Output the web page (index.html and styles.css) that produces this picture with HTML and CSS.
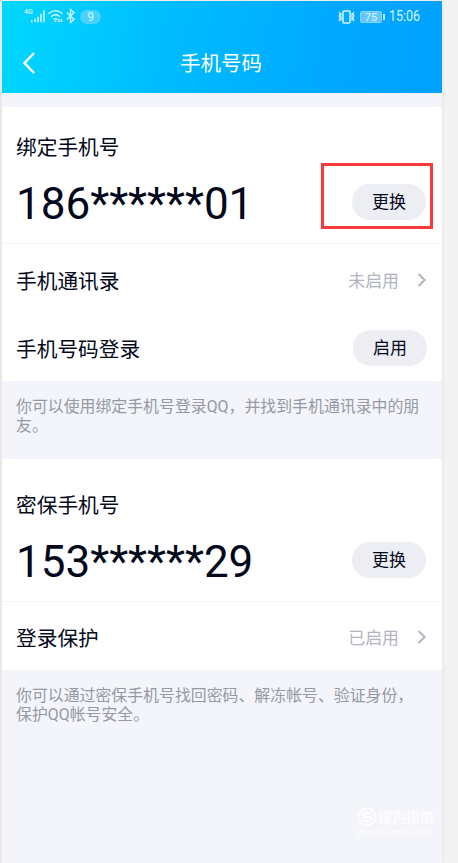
FILE: index.html
```html
<!DOCTYPE html>
<html lang="zh-CN">
<head>
<meta charset="utf-8">
<title>手机号码</title>
<link rel="stylesheet" href="styles.css">
</head>
<body>
<main class="phone">
  <header class="header">
    <div class="status">
      <span class="net">4G</span>
      <svg class="status-left" width="54" height="18" viewBox="0 0 54 18" fill="none" stroke="currentColor">
        <path stroke-width="1.500" d="M8.700 14.200v-2M12 14.200v-3.500M15 14.200v-5.500M18 14.200v-8.500M21 14.200v-12"/>
        <path stroke-width="1.300" d="M25.500 5.700q7-6 14 0M28 8.700q4.500-4 9 0M30.500 11.500q2-1.800 4 0"/>
        <path stroke-width="1.500" d="M31.500 13.300h2M36 11v3M38.500 11v3"/>
        <path stroke-width="1.300" d="M44 4.500l7 7-3.500 3V1.500l3.500 3-7 7"/>
      </svg>
      <span class="count">9</span>
      <svg class="vibrate" width="17" height="14" viewBox="0 0 17 14" fill="none" stroke="currentColor">
        <rect x="5" y="1" width="7" height="12" rx="1" stroke-width="1.500"/>
        <path stroke-width="1.100" d="M1 2l1.200 2-1.200 2 1.200 2-1.200 2 .6 1M3 3v8M16 2l-1.200 2 1.200 2-1.200 2 1.200 2-.6 1M14 3v8"/>
      </svg>
      <span class="battery">75</span>
      <span class="tip"></span>
      <span class="time">15:06</span>
    </div>
    <div class="nav">
      <svg class="back" width="14" height="24" viewBox="0 0 14 24" fill="none" stroke="#fff" stroke-width="2.500"><path d="M13 2L3.500 12l9.500 10"/></svg>
      <h1>手机号码</h1>
    </div>
  </header>
  <section class="card first">
    <div class="bound">
      <h2>绑定手机号</h2>
      <div class="number-row"><span class="number">186******01</span><button>更换</button><span class="highlight"></span></div>
    </div>
    <div class="row"><span>手机通讯录</span><span class="value">未启用<svg width="10" height="16" viewBox="0 0 10 16" fill="none" stroke="currentColor" stroke-width="2"><path d="M1.500 2l6.200 6-6.200 6"/></svg></span></div>
    <div class="row login"><span>手机号码登录</span><button>启用</button></div>
  </section>
  <p class="note">你可以使用绑定手机号登录QQ，并找到手机通讯录中的朋<br>友。</p>
  <section class="card second">
    <div class="bound">
      <h2>密保手机号</h2>
      <div class="number-row"><span class="number">153******29</span><button>更换</button></div>
    </div>
    <div class="row"><span>登录保护</span><span class="value">已启用<svg width="10" height="16" viewBox="0 0 10 16" fill="none" stroke="currentColor" stroke-width="2"><path d="M1.500 2l6.200 6-6.200 6"/></svg></span></div>
  </section>
  <p class="note last">你可以通过密保手机号找回密码、解冻帐号、验证身份，<br>保护QQ帐号安全。</p>
  <div class="watermark">
    <div class="brand"><svg width="20" height="20" viewBox="0 0 20 20" fill="none" stroke="currentColor"><circle cx="10" cy="10" r="8.500" stroke-width="1.500"/><path stroke-width="2.200" d="M14 6H8q-2 0-2 2t2 2h4q2 0 2 2t-2 2H6"/></svg><span>搜狗指南</span></div>
    <div class="site">zhinan.sogou.com</div>
  </div>
</main>
</body>
</html>
```
FILE: styles.css
```css
* { box-sizing: border-box; }
body {
  margin: 0;
  padding: 1px 16px 0 2px;
  height: 863px;
  overflow: hidden;
  background: linear-gradient(90deg, #e9e9e9 2px, transparent 2px), #f3f3f3;
  font-family: Roboto, "Noto Sans CJK SC", sans-serif;
  color: #03081a;
}
.phone { position: relative; height: 862px; background: #f3f5fa; box-shadow: 1px 0 3px #e5e5e5; }
.header { height: 92px; background: linear-gradient(100deg, #00d8ff 0%, #00beff 35%, #00a8ff 75%, #00a2ff 100%); color: #d9f6ff; }
.status { display: flex; align-items: center; height: 31px; padding-left: 22px; }
.net { width: 1px; height: 18px; font-size: 7px; line-height: 9px; font-weight: 500; white-space: nowrap; }
.status-left { flex: none; margin-left: -2px; margin-right: 3px; }
.count { flex: none; width: 21px; height: 14px; border-radius: 7px; background: #48d3ff; font-size: 12px; line-height: 15px; text-align: center; }
.vibrate { flex: none; margin-left: 237px; }
.battery { flex: none; width: 22px; height: 12px; margin-left: 5px; border: 1px solid #86d5ff; border-radius: 2px; background: #64c8ff; font-size: 11px; line-height: 11px; text-align: center; }
.tip { width: 2px; height: 6px; margin-left: 1px; background: #b9e8ff; }
.time { margin-left: 4px; padding-top: 1px; font-size: 14.5px; line-height: 16px; transform: scaleX(.86); transform-origin: left; }
.nav { display: flex; align-items: center; height: 61px; padding-left: 19px; }
.nav h1 { margin: 2px 0 0 145px; color: #fff; font-size: 20.5px; line-height: 30px; font-weight: 400; }
.card { background: #fff; font-size: 20.7px; }
.first { height: 274px; margin-top: 14px; }
.second { height: 211px; }
.bound { height: 137px; padding: 25px 16px 0 14px; border-bottom: 1px solid #f4f4f6; }
.second .bound { height: 143px; padding-top: 31px; }
h2 { margin: 0; font-size: 20.7px; line-height: 32px; font-weight: 400; }
.number-row { position: relative; display: flex; justify-content: space-between; align-items: center; height: 76px; }
.number { padding-top: 3px; font-size: 44px; line-height: 50px; }
button { width: 74px; height: 36px; padding: 1px 0 0; border: 0; border-radius: 18px; background: #edeef4; color: #03081a; font: 17px/35px Roboto, "Noto Sans CJK SC", sans-serif; }
.highlight { position: absolute; left: 305px; top: -1px; width: 112px; height: 66px; border: 3px solid #f93939; }
.row { display: flex; justify-content: space-between; align-items: center; height: 70px; padding: 1px 15px 0 14px; }
.row.login { height: 67px; padding-top: 0; }
.second .row { height: 68px; }
.value { display: flex; align-items: center; color: #b2b4c1; font-size: 16.9px; }
.value svg { margin-left: 18px; }
.note { margin: 0; height: 78px; padding: 16px 0 0 14px; color: #9698a3; font-size: 15.9px; line-height: 19px; white-space: nowrap; }
.watermark { position: absolute; left: 355px; top: 805px; color: #fff; }
.brand { display: flex; align-items: center; height: 21px; font-size: 14px; line-height: 18px; }
.brand span { margin-left: 1px; }
.site { font: 7.7px/12px "DejaVu Sans", sans-serif; letter-spacing: .2px; }
```
